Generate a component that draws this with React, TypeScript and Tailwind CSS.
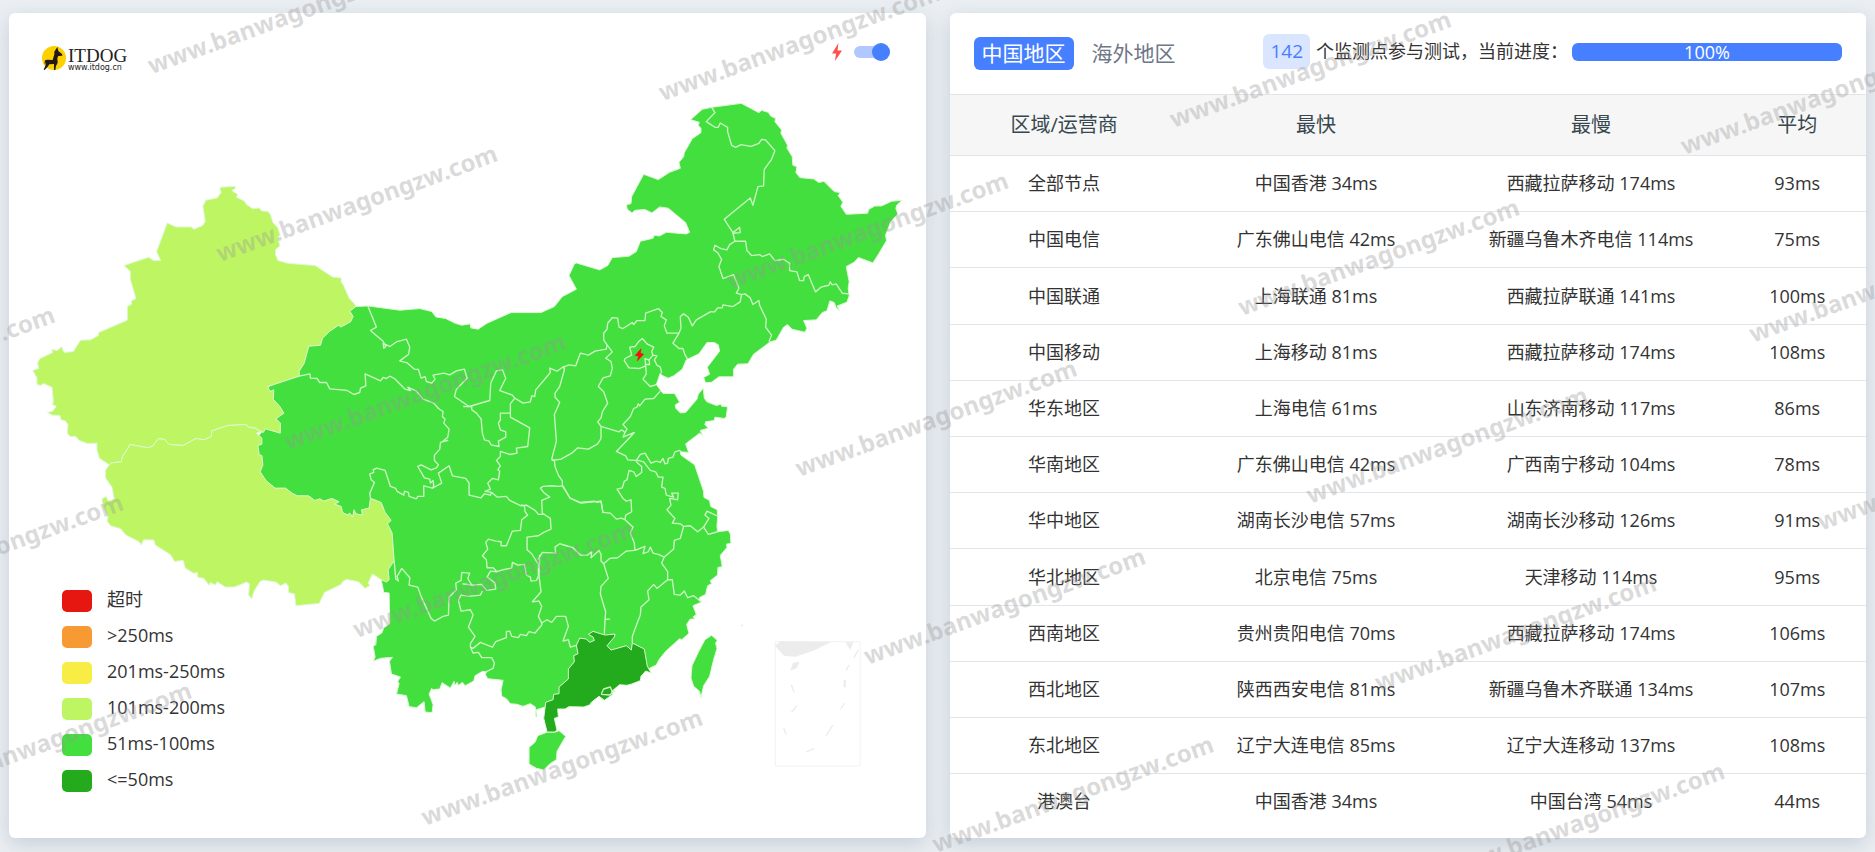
import { useState } from 'react'

const legend = [
  { label: '超时', color: 'bg-[#e61610]' },
  { label: '>250ms', color: 'bg-[#f79a34]' },
  { label: '201ms-250ms', color: 'bg-[#f8ed45]' },
  { label: '101ms-200ms', color: 'bg-[#bef663]' },
  { label: '51ms-100ms', color: 'bg-[#43df3f]' },
  { label: '<=50ms', color: 'bg-[#24aa1d]' },
]

const rows = [
  ['全部节点', '中国香港 34ms', '西藏拉萨移动 174ms', '93ms'],
  ['中国电信', '广东佛山电信 42ms', '新疆乌鲁木齐电信 114ms', '75ms'],
  ['中国联通', '上海联通 81ms', '西藏拉萨联通 141ms', '100ms'],
  ['中国移动', '上海移动 81ms', '西藏拉萨移动 174ms', '108ms'],
  ['华东地区', '上海电信 61ms', '山东济南移动 117ms', '86ms'],
  ['华南地区', '广东佛山电信 42ms', '广西南宁移动 104ms', '78ms'],
  ['华中地区', '湖南长沙电信 57ms', '湖南长沙移动 126ms', '91ms'],
  ['华北地区', '北京电信 75ms', '天津移动 114ms', '95ms'],
  ['西南地区', '贵州贵阳电信 70ms', '西藏拉萨移动 174ms', '106ms'],
  ['西北地区', '陕西西安电信 81ms', '新疆乌鲁木齐联通 134ms', '107ms'],
  ['东北地区', '辽宁大连电信 85ms', '辽宁大连移动 137ms', '108ms'],
  ['港澳台', '中国香港 34ms', '中国台湾 54ms', '44ms'],
]

// region fills
const mainland =
  '1068,920 1104,918 1200,931 1260,926 1296,935 1308,951 1338,956 1366,970 1386,976 1411,972 1413,984 1435,988 1462,970 1534,938 1624,938 1664,920 1688,890 1730,868 1708,827 1724,792 1730,789 1800,810 1824,797 1838,773 1888,769 1910,755 1922,724 1960,715 1964,706 1980,708 2000,697 2060,702 2070,697 2058,668 2006,625 1980,621 1957,639 1936,629 1906,631 1897,639 1883,628 1880,615 1894,611 1896,590 1932,523 1976,539 2010,517 2042,505 2038,487 2052,470 2054,458 2078,416 2104,398 2104,385 2096,376 2099,367 2073,359 2108,328 2136,322 2225,310 2278,338 2286,331 2306,337 2314,349 2328,355 2326,365 2346,390 2344,400 2364,436 2362,444 2378,470 2380,496 2392,500 2389,518 2401,533 2443,537 2458,548 2473,544 2504,575 2522,578 2516,587 2530,607 2524,619 2540,643 2604,640 2608,628 2626,618 2646,618 2676,604 2708,601 2692,615 2689,625 2695,642 2674,665 2658,706 2661,722 2638,761 2620,789 2577,773 2564,787 2540,800 2549,845 2546,865 2549,888 2542,907 2513,918 2520,932 2510,924 2504,908 2491,903 2482,933 2468,938 2450,960 2412,962 2422,985 2416,997 2377,988 2364,974 2352,982 2330,1021 2312,1026 2262,1063 2245,1092 2214,1093 2202,1108 2202,1131 2158,1131 2136,1147 2118,1149 2112,1133 2130,1123 2123,1102 2160,1054 2156,1035 2144,1028 2122,1028 2098,1062 2060,1080 2048,1108 2022,1128 2006,1135 1986,1126 1982,1120 1970,1154 1990,1181 2025,1181 2040,1207 2027,1215 2028,1225 2042,1239 2058,1238 2092,1198 2096,1183 2111,1165 2114,1195 2122,1206 2150,1217 2164,1213 2166,1219 2184,1221 2180,1251 2174,1256 2146,1252 2144,1262 2118,1266 2116,1274 2126,1285 2102,1292 2109,1306 2100,1300 2058,1332 2067,1358 2042,1356 2044,1366 2085,1395 2112,1475 2113,1493 2130,1502 2133,1520 2153,1530 2154,1555 2152,1578 2154,1596 2186,1592 2192,1602 2194,1631 2181,1633 2182,1643 2162,1667 2168,1701 2155,1703 2154,1726 2132,1743 2136,1752 2124,1758 2118,1784 2100,1793 2098,1802 2106,1807 2080,1818 2090,1844 2080,1852 2086,1858 2072,1858 2061,1874 2068,1901 2046,1920 2040,1917 1998,1955 1978,1980 1970,1996 1953,2004 1938,2014 1860,2040 1700,2100 1634,2123 1610,2130 1612,2153 1608,2150 1607,2122 1592,2112 1570,2120 1552,2114 1532,2112 1520,2097 1506,2090 1504,2070 1510,2042 1464,2037 1457,2025 1460,2016 1448,2015 1426,2028 1422,2044 1396,2058 1388,2048 1376,2057 1372,2048 1364,2058 1363,2045 1352,2065 1327,2049 1320,2068 1298,2070 1296,2066 1288,2083 1300,2115 1297,2139 1276,2137 1273,2106 1250,2124 1228,2121 1220,2088 1190,2083 1198,2052 1194,2045 1202,2032 1175,2023 1169,1985 1178,1973 1142,1976 1120,1985 1126,1972 1120,1940 1128,1935 1130,1910 1146,1900 1152,1884 1170,1872 1168,1780 1152,1778 1146,1748 1145,1740 1120,1600 1090,1560 780,1460 760,1330 790,1290 795,1165 890,1120 915,1040 1000,950'

const xinjiang =
  '662,562 706,559 706,566 696,572 714,584 709,591 734,604 740,614 758,626 778,624 785,633 803,634 812,644 819,667 834,684 841,706 834,712 840,738 827,749 827,764 834,782 864,790 946,797 998,831 1024,834 1024,846 1032,858 1048,895 1065,913 1068,920 1050,934 1060,950 1052,966 1022,982 1018,975 990,994 968,1015 962,1036 927,1039 913,1090 898,1114 898,1129 804,1160 810,1175 822,1170 820,1198 840,1220 852,1240 828,1257 842,1270 841,1300 797,1287 790,1298 783,1295 765,1285 746,1282 738,1274 684,1277 636,1293 634,1310 612,1320 588,1316 550,1337 508,1334 494,1319 476,1316 458,1339 444,1344 390,1334 384,1346 368,1370 364,1386 336,1389 328,1395 298,1375 291,1350 291,1330 262,1331 238,1322 226,1309 212,1311 202,1300 204,1274 196,1263 183,1260 180,1247 158,1246 142,1238 158,1234 169,1220 158,1214 160,1204 156,1162 130,1151 122,1157 111,1154 111,1134 98,1112 116,1106 113,1088 120,1076 158,1058 155,1049 172,1052 185,1041 192,1058 220,1055 242,1021 272,1020 295,1007 296,998 382,961 382,920 396,912 393,904 408,896 391,838 391,814 372,797 446,772 461,782 482,782 470,755 502,669 528,681 574,681 582,688 608,677 616,665 609,618 618,601 652,594 664,577 660,566'

const tibet =
  '328,1395 316,1412 317,1435 336,1462 343,1498 325,1504 318,1490 306,1498 310,1520 324,1550 322,1565 332,1578 362,1587 378,1606 416,1625 424,1636 431,1620 462,1621 466,1636 512,1665 524,1685 550,1682 556,1705 582,1721 592,1718 594,1733 612,1736 628,1757 632,1748 646,1756 652,1746 676,1762 702,1762 716,1757 740,1747 749,1752 746,1786 756,1797 762,1775 780,1746 790,1741 828,1747 842,1758 858,1750 866,1760 866,1778 884,1783 888,1818 958,1811 974,1778 1024,1754 1028,1746 1040,1739 1076,1746 1096,1766 1110,1757 1105,1750 1118,1723 1145,1740 1160,1747 1168,1740 1165,1710 1183,1683 1177,1600 1163,1572 1174,1562 1156,1538 1144,1508 1116,1497 1112,1496 1108,1525 1085,1530 1088,1546 1068,1542 1063,1530 1058,1552 1050,1540 1042,1546 1028,1538 1024,1520 1004,1513 1018,1506 996,1496 972,1504 960,1497 945,1502 926,1488 892,1488 878,1481 857,1465 826,1465 799,1443 781,1416 789,1395 786,1367 778,1365 774,1337 786,1333 786,1315 770,1300 783,1295 765,1285 746,1282 738,1274 684,1277 636,1293 634,1310 612,1320 588,1316 550,1337 508,1334 494,1319 476,1316 458,1339 444,1344 390,1334 384,1346 368,1370 364,1386 336,1389'

const guangdong =
  '1730,1937 1740,1915 1760,1918 1770,1928 1784,1922 1780,1912 1766,1904 1780,1895 1816,1906 1846,1903 1844,1912 1822,1938 1834,1951 1880,1938 1895,1951 1898,1930 1934,1948 1943,2000 1955,2020 1938,2014 1924,2030 1922,2043 1896,2053 1882,2057 1860,2055 1836,2075 1838,2085 1828,2092 1814,2102 1798,2090 1775,2108 1770,2116 1752,2122 1708,2121 1696,2128 1674,2128 1676,2152 1664,2156 1672,2192 1664,2197 1642,2197 1632,2156 1638,2108 1660,2100 1662,2084 1678,2082 1678,2062 1706,2038 1706,2008 1724,1986 1722,1968 1735,1962'

const hainan =
  '1678,2193 1698,2210 1672,2255 1670,2280 1650,2293 1632,2311 1610,2306 1588,2293 1588,2243 1606,2228 1614,2208 1644,2197 1664,2198'

const taiwan =
  '2136,1907 2153,1922 2148,1930 2152,1947 2142,1980 2130,2030 2112,2058 2104,2094 2100,2075 2082,2060 2074,2035 2077,1998 2098,1954 2116,1920'

// province borders, one group per part of the country
const borders = [
  {
    // northwest
    offset: 'translate(780 810)',
    lines: [
      '324,108 350,172 332,182 370,214 378,230 372,235 370,220 390,230 412,215 440,208 450,232 446,254 420,273 442,279 464,298 476,299 484,325 496,320 500,335 516,340 526,328 520,316 552,310 570,315 590,303 614,298 622,325 590,358 584,380 628,410 690,392 693,340 710,303 728,300 738,325 720,362 758,376 765,385 790,400 812,396 816,378 825,380 828,360 862,320 872,308 870,295 892,304 912,290 914,300',
      '118,319 150,312 152,325 172,326 180,338 200,338 210,357 245,360 262,362 282,374 300,368 302,355 318,348 316,312 362,333 370,323 380,326 390,319 404,326 436,358 452,362 444,352 470,364 490,388 522,400 536,416 550,425 548,440 556,448 552,460 568,478 564,502 548,515 564,512 542,518 540,538 524,556 524,572 536,585 530,594 514,600 484,585 474,590 494,624 510,628 512,640 520,632 522,648 518,655 492,648 492,680 474,680 470,687 448,680 446,668 434,664 432,676 412,665 408,656 392,650 376,602 350,595 340,600 342,608 330,612 334,630 344,638 330,670 332,686',
      '518,655 546,640 536,610 568,588 578,618 618,626 628,640 628,676 664,684 674,672 692,676 696,668 676,665 692,658 684,640 698,626 716,630 720,604 714,600 722,588 710,572 722,560 722,545 750,554 772,550 770,535 804,530 810,474 752,442 752,430 722,430 722,450 716,460 722,480 738,486 738,502 716,514 718,530 694,525 688,514 674,510 668,490 664,447 650,430 636,420 636,410 612,410 628,410',
      '752,430 752,402 765,385',
      '696,668 712,682 740,680 750,692 784,708 800,706 826,722 836,734 856,734',
      '914,300 900,350 886,370 886,382 900,398 884,434 890,514 876,568 884,572 886,590 896,616 908,634 908,648 896,650 876,648 850,650 842,655 852,668 870,682 846,692 848,734',
      '908,648 932,686 964,700 1024,694 1030,730',
    ],
  },
  {
    // north
    offset: 'translate(1620 870)',
    lines: [
      '74,240 74,230 88,225 108,228 122,190 146,196 166,184 200,178 202,165 192,150 192,130 202,118 204,100 218,83 234,85 238,112 250,116 278,98 282,104 292,92 316,92 318,70 356,56 368,68 364,80 380,90 374,108 382,130 418,130 424,115 422,80 432,72 446,82 458,108 470,90 512,66 525,66 534,54 548,54 550,45 580,50 602,36 606,12',
      '418,130 400,160 418,176 430,176 436,195 444,208',
      '202,165 218,186 198,205 214,215 218,235 212,258 190,264 176,290 192,306 204,340 188,366 184,384 174,396 184,410 184,446 174,462 146,478 114,474 96,490 64,508 36,512',
      '184,410 238,426 246,420 256,428 262,418 250,404 272,380 282,356 292,352 296,342 300,348 316,328 342,326 362,304',
      '256,428 250,442 284,428 264,450 230,485 258,498 264,510 290,512 302,494 316,490 334,520 350,514 362,518 370,506 376,522 384,520 386,506 400,502 406,486 420,482 426,487',
      '270,172 286,170 298,154 308,146 322,162 342,172 336,186 340,196 328,210 316,206 318,228 298,236 268,234 254,212 256,206 276,196 270,172',
      '340,196 352,198 344,210 352,226 362,232 366,250',
      '318,228 320,252 310,268 332,290 350,284',
      '328,208 330,224 318,224',
    ],
  },
  {
    // northeast
    offset: 'translate(1680 240)',
    lines: [
      '456,82 466,98 440,125 466,142 476,142 482,129 504,142 504,155 516,196 528,202 544,194 574,199 598,190 606,178 618,180 646,212 636,238 614,268 612,318 595,320 580,376 572,354 494,418 520,458 530,450 540,442 542,458 520,460 526,484 558,484 562,512 576,527 600,524 608,530 630,522 646,542 672,538 690,550 690,572 712,576 720,602 732,602 734,590 746,584 768,636 784,622 808,616 812,606 818,615 830,612 848,640 869,642',
      '526,484 510,494 502,510 484,506 466,496 462,510 474,518 486,538 478,560 490,596 522,584 538,625 530,640 546,644',
      '546,644 556,642 572,654 580,674 598,662 600,676 620,718 618,742 636,766 628,786',
    ],
  },
  {
    // east and centre
    offset: 'translate(1560 1290)',
    lines: [
      '350,90 352,98 366,110 366,128 350,140 342,126 328,122 322,150 314,154 308,174 292,178 310,206 320,214 334,210 336,246 318,256 316,270',
      '350,90 372,96 392,122 408,126 416,142 430,142 426,172 436,176 440,196 462,202 456,190 476,190 474,210 450,206 454,226 442,240 466,266 458,280 482,282 492,290',
      '492,290 512,288 534,306 552,292 568,266 556,256 562,244 592,258',
      '552,292 566,314 594,306',
      '492,290 482,326 464,332 462,358 434,382 426,400 444,426 444,450 458,450 464,494 482,496 494,484 504,504 522,498 546,517',
      '434,382 416,374 400,370 392,352 386,366 370,372 376,350 346,362 344,340 332,310 340,292 316,270 305,265 290,268 272,250 250,248 244,214 234,218 224,214 180,218 150,204 130,168',
      '346,362 320,364 294,384 270,386 252,402 244,394 244,374 238,362 214,384 216,366 204,376 182,376 160,354 120,342 106,352 108,370 68,368 54,390',
      '60,375 58,440 64,486 38,516 58,514 66,530 56,560 66,580',
      '252,402 266,446 244,470 242,492 250,520 258,546 256,568 270,568 256,570 254,612',
      '66,580 82,570 96,578 110,560 138,560 146,590 130,634 146,630 152,652 172,646',
      '444,450 412,476 402,464 384,484 388,510 364,532 362,556 354,576 338,620 338,640',
    ],
  },
  {
    // southwest
    offset: 'translate(1080 1440)',
    lines: [
      '484,75 494,78 496,96 504,106 486,120 482,152 458,154 440,198 424,198 424,186 408,184 386,178 378,188 384,208 368,228 380,240 382,264 400,264 412,276',
      '550,102 572,116 574,148 552,158 536,168 502,172 502,210 516,222 536,254 536,290',
      '412,276 430,270 456,265 458,248 474,256 494,254 500,286 512,292 514,304 530,302 536,290',
      '412,276 392,274 382,292 406,310 408,328 380,332 366,314 336,316 308,312',
      '103,243 108,298 116,304 112,290 126,266 150,294 148,316 174,322 184,350 214,416 224,424 250,410 266,406 268,352 290,330 288,310 304,302 306,278 330,280 324,296 336,316',
      '368,334 362,346 326,350 304,346 296,362 304,394 332,390 340,406 326,442 346,470 332,492 332,502 340,506 362,488 398,502 408,486 440,474 440,456 450,454 456,470 476,474 482,464 500,468 508,456 526,460 546,436 546,430',
      '332,502 340,520 356,518 366,534 396,534 404,550 400,566 380,576',
      '726,640 732,628 752,622 756,632 764,634 750,646 726,644 726,640',
    ],
  },
]

function Logo() {
  return (
    <div className="mt-[11px] flex items-start gap-[2px]">
      <svg viewBox="0 0 72 72" className="h-6 w-6">
        <circle cx="36" cy="36" r="36" fill="#fdd000" />
        <path
          d="M46 3 L49 15 L60 24 L61 29 L49 30 L46 36 L47 50 L42 60 L40 72 L36 72 L36 54 L22 55 L17 62 L8 72 L5 71 L11 57 L10 49 L7 57 L9 43 L16 41 L32 42 L37 25 L37 17 Z"
          fill="#231815"
        />
      </svg>
      <div className="mt-[2px] flex flex-col">
        <span className="font-['Liberation_Serif'] text-[19px] leading-[16px] text-[#222]">ITDOG</span>
        <span className="font-['DejaVu_Sans'] text-[8px] leading-[8px] text-[#222]">www.itdog.cn</span>
      </div>
    </div>
  )
}

function ChinaMap() {
  return (
    <svg viewBox="27 282 2751 2232" className="block w-full" strokeLinejoin="round" role="img" aria-label="中国地区">
      <g stroke="#dff8d6" strokeWidth="3">
        <polygon points={mainland} fill="#43df3f" />
        <polygon points={xinjiang} fill="#bef663" />
        <polygon points={tibet} fill="#bef663" />
        <polygon points={hainan} fill="#43df3f" />
        <polygon points={taiwan} fill="#43df3f" />
        <polygon points={guangdong} fill="#24aa1d" />
      </g>
      {borders.map((group) => (
        <g key={group.offset} transform={group.offset} fill="none" stroke="#cdf6c4" strokeWidth="4">
          {group.lines.map((line) => (
            <polyline key={line} points={line} />
          ))}
        </g>
      ))}
      <polygon points="1924,1047 1907,1067 1917,1069 1913,1083 1932,1063 1922,1060" fill="#f5120c" stroke="#f5120c" strokeWidth="2" />

      {/* South China Sea inset */}
      <g transform="translate(1560 1290)" fill="#ececec">
        <rect x="767" y="636" width="255" height="373" fill="none" stroke="#f2f2f2" strokeWidth="3" />
        <polygon points="784,635 935,637 885,662 828,681 794,679 766,648" />
        <polygon points="978,638 1002,638 992,661" />
        <polygon points="820,700 840,696 832,715 812,724" />
        <polygon points="972,750 979,750 979,773 972,773" />
        <polygon points="660,589 672,582 668,590" />
        <g fill="none" stroke="#ececec" strokeWidth="4">
          <path d="M1016 661 1003 684M989 706 979 723M815 765 824 788M832 828 816 847M975 820 963 838M792 895 800 915M940 886 920 918M884 957 860 967" />
        </g>
      </g>
    </svg>
  )
}

function MapCard() {
  const [fast, setFast] = useState(true)
  return (
    <section className="relative rounded-md bg-white shadow-[0_6px_20px_rgba(70,90,120,0.22)]">
      <div className="flex h-[81px] items-center justify-between pr-9 pl-[33px]">
        <Logo />
        <label className="mb-1 flex cursor-pointer items-center gap-3">
          <svg viewBox="0 0 10 18" className="h-[18px] w-[10px]" fill="#ff5050">
            <path d="M6.5 0 0 10.5H4L3 18 10 7.5H5.5Z" />
          </svg>
          <span className="sr-only">快速测试</span>
          <input type="checkbox" className="peer sr-only" checked={fast} onChange={(e) => setFast(e.target.checked)} />
          <span className="flex h-3 w-9 items-center justify-start rounded-full bg-[#b0c7ff] peer-checked:justify-end">
            <span className="h-[18px] w-[18px] rounded-full bg-[#467fff]"></span>
          </span>
        </label>
      </div>
      <ChinaMap />
      <ul className="absolute bottom-[39px] left-[53px] text-[18px]">
        {legend.map((item) => (
          <li key={item.label} className="flex h-9 items-center gap-[15px]">
            <span className={`h-[22px] w-[30px] rounded-[5px] ${item.color}`}></span>
            <span className="pb-1">{item.label}</span>
          </li>
        ))}
      </ul>
    </section>
  )
}

function ResultCard() {
  return (
    <section className="rounded-md bg-white pb-[9px] shadow-[0_6px_20px_rgba(70,90,120,0.22)]">
      <div className="flex h-[81px] items-center justify-between px-6">
        <div className="flex gap-[10px] text-[21px] leading-[33px]">
          <button className="rounded-md bg-[#467fff] px-2 text-white">中国地区</button>
          <button className="rounded-md px-2 text-[#6e7687]">海外地区</button>
        </div>
        <div className="mb-1 flex items-center text-[18px]">
          <span className="rounded-md bg-[#dae5ff] px-[7px] text-[19px] leading-[35px] text-[#467fff]">142</span>
          <span className="ml-[6px] whitespace-nowrap">个监测点参与测试，当前进度：</span>
          <div className="ml-1 h-[18px] w-[270px] rounded-md bg-[#467fff] text-center leading-[18px] text-white">100%</div>
        </div>
      </div>
      <table className="h-[735px] w-full table-fixed text-center text-[18px]">
        <thead>
          <tr className="h-[61px] border-y border-[#e0e5ec] bg-[#f6f6f6] text-[20px] text-[#36474f]">
            <th className="w-[25%] font-normal">区域/运营商</th>
            <th className="w-[30%] font-normal">最快</th>
            <th className="w-[30%] font-normal">最慢</th>
            <th className="w-[15%] font-normal">平均</th>
          </tr>
        </thead>
        <tbody>
          {rows.map((row) => (
            <tr key={row[0]} className="border-b border-[#e0e5ec] last:border-b-0">
              {row.map((cell, i) => (
                <td key={i}>{cell}</td>
              ))}
            </tr>
          ))}
        </tbody>
      </table>
    </section>
  )
}

function Watermark() {
  return (
    <div className="pointer-events-none absolute inset-0 overflow-hidden" aria-hidden="true">
      <div className="absolute top-[211px] left-[-300px] grid origin-top-left -rotate-20 auto-rows-[200px] grid-cols-[repeat(5,471px)] font-['Noto_Sans'] text-[24px] leading-[34px] font-bold text-[#969696]/35">
        {Array.from({ length: 35 }, (_, i) => (
          <span key={i}>www.banwagongzw.com</span>
        ))}
      </div>
    </div>
  )
}

export default function App() {
  return (
    <div className="relative min-h-screen overflow-hidden bg-[#ebeff3] px-[9px] pt-[13px] pb-[14px] font-['Open_Sans','Noto_Sans_CJK_SC',sans-serif] text-[#333]">
      <main className="grid grid-cols-2 gap-6">
        <MapCard />
        <ResultCard />
      </main>
      <Watermark />
    </div>
  )
}
